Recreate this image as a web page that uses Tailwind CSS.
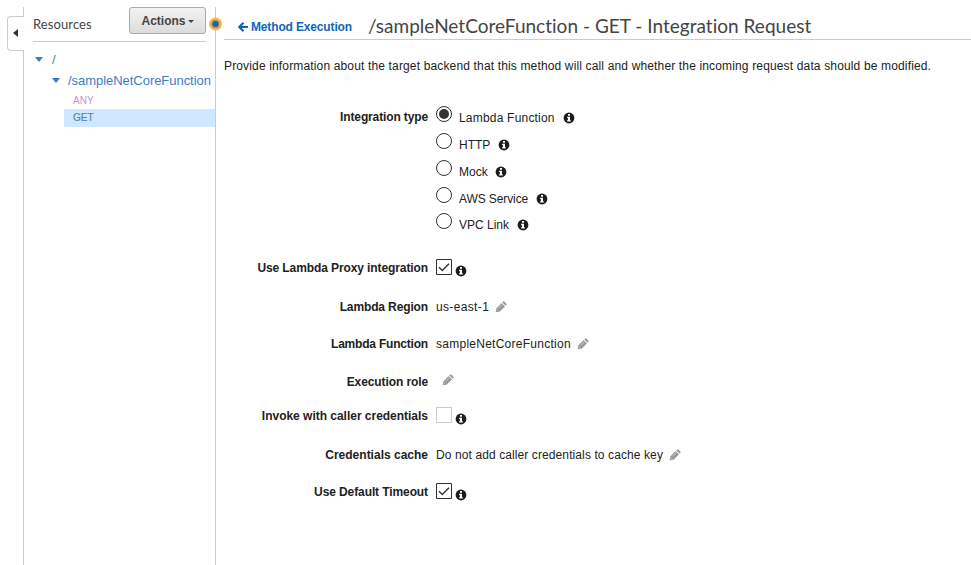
<!DOCTYPE html>
<html lang="en">
<head>
<meta charset="utf-8">
<title>Integration Request</title>
<script src="https://cdn.jsdelivr.net/npm/@tailwindcss/browser@4"></script>
</head>
<body class="h-[565px] w-[971px] overflow-hidden bg-white font-['Liberation_Sans',Arial,sans-serif] text-[12px] leading-4 text-[#222]">
<svg class="hidden">
  <symbol id="info" viewBox="0 0 12 12"><circle cx="6" cy="6" r="5.400" fill="#1c1c1c"/><path fill="#fff" d="M5 2h2v1.800H5zM4.100 4.800H7v3.500h.8v1.200H4.100V8.300h.8V6h-.8z"/></symbol>
  <symbol id="pencil" viewBox="0 0 12 12"><path fill="#999" d="M.7 11.300l.6-3.900 5.300-5.300 3.300 3.300-5.300 5.300zM7.300 1.400l.8-.8q.6-.5 1.200 0l2.100 2.100q.5.600 0 1.200l-.8.8z"/><path d="M1.700 8.500l1.800 1.800M3.700 7.200l3.400-3.400" stroke="#ddd" stroke-width=".7"/></symbol>
  <symbol id="radio" viewBox="0 0 16 16"><circle cx="8" cy="8" r="7.500" fill="#fff" stroke="#333"/></symbol>
  <symbol id="check" viewBox="0 0 16 16"><path d="M.5.5h15v15H.5z" fill="#fff" stroke="#333"/><path d="M3 8.200l3.300 3.300L13 4.700" fill="none" stroke="#333" stroke-width="1.300"/></symbol>
</svg>
<div class="flex h-full">
  <aside class="flex w-[216px] shrink-0 pt-[7px]">
    <div class="flex w-[24px] shrink-0 flex-col items-end">
      <div class="h-[9px] w-px bg-[#ccc]"></div>
      <div class="flex h-[35px] w-[17px] items-center rounded-l-[4px] border border-r-0 border-[#ccc] pl-[5px]">
        <svg class="-mt-[2px] h-[8px] w-[5px]" viewBox="0 0 5 8"><path d="M5 0v8L0 4z" fill="#333"/></svg>
      </div>
      <div class="w-px flex-1 bg-[#ccc]"></div>
    </div>
    <div class="flex flex-1 flex-col border-r border-[#ccc]">
      <div class="ml-[9px] mr-[9px] flex h-[35px] items-start justify-between border-b border-[#ccc]">
        <h2 class="mt-[8px] font-[Lato,sans-serif] text-[13px] leading-[18px] tracking-[0.1px] text-[#444]">Resources</h2>
        <button class="flex h-[27px] w-[77px] items-center justify-center gap-[2px] rounded-[3px] border border-[#aaa] bg-linear-to-b from-[#f2f2f2] to-[#dcdcdc] font-bold text-[#444]">Actions<svg class="mt-px h-[3px] w-[6px]" viewBox="0 0 6 3"><path d="M0 0h6L3 3z" fill="#444"/></svg></button>
      </div>
      <ul class="pt-[7px] text-[13px] text-[#3b7dc4]">
        <li class="flex h-[21px] items-center pl-[11px]"><svg class="h-[5px] w-[8px]" viewBox="0 0 8 5"><path d="M0 0h8L4 5z" fill="#3b7dc4"/></svg><span class="ml-[9px]">/</span></li>
        <li class="flex h-[22px] items-center pl-[28px]"><svg class="-mt-px h-[5px] w-[8px]" viewBox="0 0 8 5"><path d="M0 0h8L4 5z" fill="#3b7dc4"/></svg><span class="ml-[8px] tracking-[-0.04px]">/sampleNetCoreFunction</span></li>
        <li class="flex h-[17px] items-center pl-[49px] text-[10px] text-[#c793d6]">ANY</li>
        <li class="ml-[40px] flex h-[18px] items-center bg-[#cfe7ff] pl-[9px] text-[10px] text-[#5487bb] [-webkit-text-stroke:0.2px_#5487bb]">GET</li>
      </ul>
    </div>
  </aside>
  <main class="relative flex-1 pl-[8px]">
    <svg class="absolute left-[-7px] top-[17px] h-[14px] w-[14px]" viewBox="0 0 14 14"><circle cx="6.500" cy="7" r="6.500" fill="#fdb447"/><circle cx="6.500" cy="7" r="3.900" fill="#8b8467"/><circle cx="6.500" cy="7" r="2.800" fill="#1166bb"/></svg>
    <header class="flex h-[40px] border-b border-[#ccc] pl-[14px]">
      <a class="mt-[19px] flex h-4 items-center font-bold tracking-[-0.15px] text-[#1166bb]"><svg class="mr-[3px] h-[10px] w-[10px]" viewBox="0 0 10 10"><path d="M5.500 .8L1.300 5l4.200 4.200M1.500 5H10" fill="none" stroke="#1166bb" stroke-width="2.100"/></svg>Method Execution</a>
      <h1 class="ml-[16px] mt-[14px] whitespace-nowrap font-[Lato,sans-serif] text-[19px] leading-6 tracking-[0.02px] text-[#444] [font-variant-ligatures:none]">/sampleNetCoreFunction - GET - Integration Request</h1>
    </header>
    <p class="mt-[18px] whitespace-nowrap tracking-[0.15px]">Provide information about the target backend that this method will call and whether the incoming request data should be modified.</p>
    <form class="mt-[32px] whitespace-nowrap">
      <section class="flex h-[144px]">
        <b class="mt-[3px] w-[204px] text-right tracking-[-0.13px]">Integration type</b>
        <div class="ml-[8px]">
          <label class="flex h-[27px]"><svg class="h-4 w-4" viewBox="0 0 16 16"><circle cx="8" cy="8" r="7.500" fill="none" stroke="#333"/><circle cx="8" cy="8" r="5" fill="#333"/></svg><span class="ml-[7px] mt-[4px] tracking-[0.2px]">Lambda Function</span><svg class="ml-[8px] mt-[6px] h-3 w-3"><use href="#info"/></svg></label>
          <label class="flex h-[27px]"><svg class="h-4 w-4"><use href="#radio"/></svg><span class="ml-[7px] mt-[4px]">HTTP</span><svg class="ml-[8px] mt-[6px] h-3 w-3"><use href="#info"/></svg></label>
          <label class="flex h-[27px]"><svg class="h-4 w-4"><use href="#radio"/></svg><span class="ml-[7px] mt-[4px]">Mock</span><svg class="ml-[7px] mt-[6px] h-3 w-3"><use href="#info"/></svg></label>
          <label class="flex h-[26px]"><svg class="h-4 w-4"><use href="#radio"/></svg><span class="ml-[7px] mt-[4px] tracking-[-0.1px]">AWS Service</span><svg class="ml-[8px] mt-[6px] h-3 w-3"><use href="#info"/></svg></label>
          <label class="flex h-[26px]"><svg class="h-4 w-4"><use href="#radio"/></svg><span class="ml-[7px] mt-[4px]">VPC Link</span><svg class="ml-[8px] mt-[6px] h-3 w-3"><use href="#info"/></svg></label>
        </div>
      </section>
      <div class="flex h-[36px] items-center gap-[8px]"><b class="w-[204px] text-right tracking-[-0.1px]">Use Lambda Proxy integration</b><div class="flex gap-[3px]"><svg class="-mt-px h-4 w-4"><use href="#check"/></svg><svg class="mt-[5px] h-3 w-3"><use href="#info"/></svg></div></div>
      <div class="flex h-[41px] items-center gap-[8px]"><b class="w-[204px] text-right tracking-[-0.13px]">Lambda Region</b><span class="tracking-[0.35px]">us-east-1</span><svg class="-ml-[2px] h-3 w-3"><use href="#pencil"/></svg></div>
      <div class="flex h-[34px] items-center gap-[8px]"><b class="w-[204px] text-right tracking-[-0.2px]">Lambda Function</b><span class="tracking-[0.26px]">sampleNetCoreFunction</span><svg class="-ml-[2px] h-3 w-3"><use href="#pencil"/></svg></div>
      <div class="flex h-[42px] items-center gap-[8px]"><b class="w-[204px] text-right tracking-[-0.1px]">Execution role</b><svg class="-mt-[4px] ml-[6px] h-3 w-3"><use href="#pencil"/></svg></div>
      <div class="flex h-[25px] items-center gap-[8px]"><b class="w-[204px] text-right tracking-[-0.02px]">Invoke with caller credentials</b><div class="flex h-4 gap-[3px]"><i class="-mt-px block h-4 w-4 border border-[#ccc]"></i><svg class="mt-[5px] h-3 w-3 shrink-0"><use href="#info"/></svg></div></div>
      <div class="flex h-[54px] items-center gap-[8px]"><b class="w-[204px] text-right">Credentials cache</b><span class="tracking-[0.1px]">Do not add caller credentials to cache key</span><svg class="-ml-[2px] h-3 w-3"><use href="#pencil"/></svg></div>
      <div class="flex h-[20px] items-center gap-[8px]"><b class="w-[204px] text-right tracking-[-0.1px]">Use Default Timeout</b><div class="flex gap-[3px]"><svg class="-mt-px h-4 w-4"><use href="#check"/></svg><svg class="mt-[5px] h-3 w-3"><use href="#info"/></svg></div></div>
    </form>
  </main>
</div>
</body>
</html>
